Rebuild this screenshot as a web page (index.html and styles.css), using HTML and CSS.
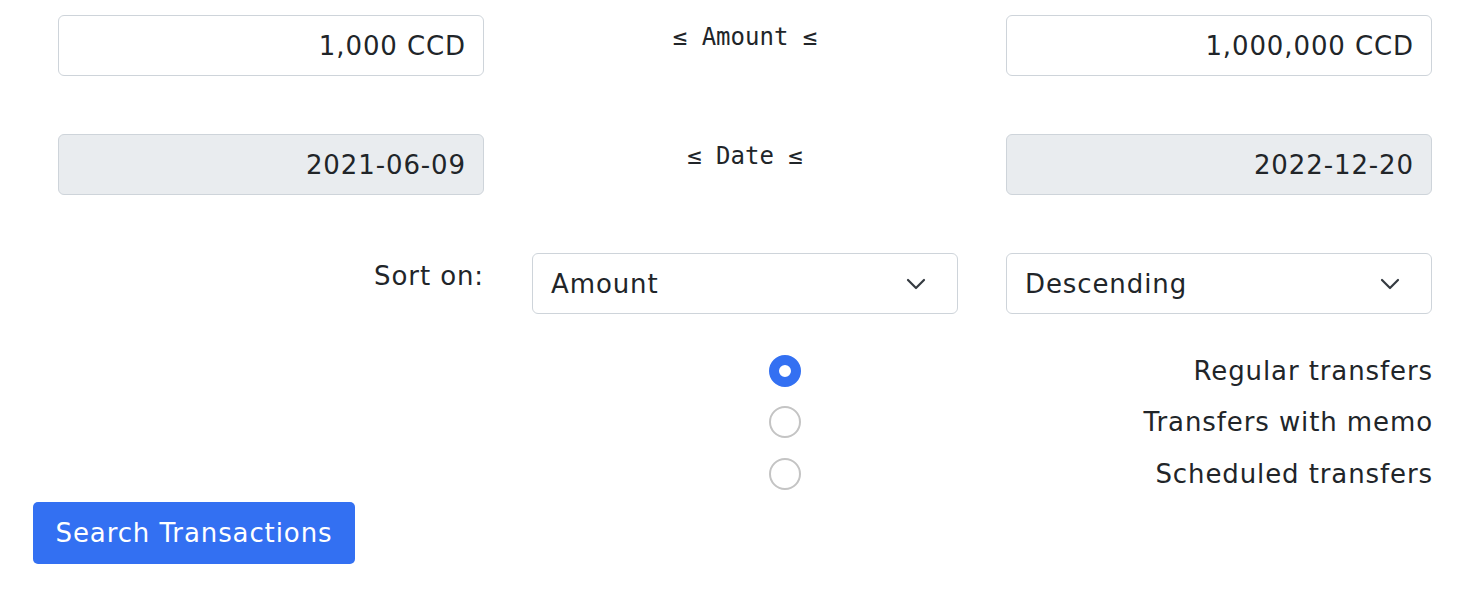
FILE: index.html
```html
<!DOCTYPE html>
<html lang="en">
<head>
<meta charset="utf-8">
<title>Search Transactions</title>
<link rel="stylesheet" href="styles.css">
</head>
<body>
<form class="search">
  <div class="grid">
    <div class="cell"><div class="field">1,000 CCD</div></div>
    <div class="cell mid"><span class="mono">≤ Amount ≤</span></div>
    <div class="cell"><div class="field">1,000,000 CCD</div></div>

    <div class="cell"><div class="field disabled">2021-06-09</div></div>
    <div class="cell mid"><span class="mono">≤ Date ≤</span></div>
    <div class="cell"><div class="field disabled">2022-12-20</div></div>

    <div class="cell label-cell"><span class="label">Sort on:</span></div>
    <div class="cell"><div class="select"><span>Amount</span><svg class="chev" viewBox="0 0 20 12" width="20" height="12"><path d="M2 2l8 8 8-8" fill="none" stroke="#343a40" stroke-width="2.2" stroke-linecap="round" stroke-linejoin="round"/></svg></div></div>
    <div class="cell"><div class="select"><span>Descending</span><svg class="chev" viewBox="0 0 20 12" width="20" height="12"><path d="M2 2l8 8 8-8" fill="none" stroke="#343a40" stroke-width="2.2" stroke-linecap="round" stroke-linejoin="round"/></svg></div></div>
  </div>

  <div class="radios">
    <div class="radio-row"><span class="radio checked"></span><span class="rlabel">Regular transfers</span></div>
    <div class="radio-row"><span class="radio"></span><span class="rlabel">Transfers with memo</span></div>
    <div class="radio-row"><span class="radio"></span><span class="rlabel">Scheduled transfers</span></div>
  </div>

  <button type="button" class="btn">Search Transactions</button>
</form>
</body>
</html>
```
FILE: styles.css
```css
* { box-sizing: border-box; }
html, body { margin: 0; background: #fff; }
body {
  font-family: "DejaVu Sans", "Noto Sans", sans-serif;
  color: #212529;
  letter-spacing: 0.9px;
}
.search {
  padding: 15px 0 0 33px;
  width: 1457px;
}
.grid {
  display: grid;
  grid-template-columns: repeat(3, 426px);
  column-gap: 48px;
  row-gap: 58px;
  padding: 0 0 0 25px;
}
.cell { height: 61px; }
.mid {
  display: flex;
  justify-content: center;
  padding-top: 6px;
}
.mono {
  font-family: "DejaVu Sans Mono", monospace;
  font-size: 24px;
  line-height: 32px;
  letter-spacing: 0;
  color: #212529;
}
.field {
  height: 61px;
  border: 1.5px solid #ced4da;
  border-radius: 6px;
  background: #fff;
  display: flex;
  align-items: center;
  justify-content: flex-end;
  padding: 0 17px;
  font-size: 26px;
}
.field.disabled { background: #e9ecef; }
.label-cell {
  display: flex;
  justify-content: flex-end;
  padding-top: 7px;
}
.label { font-size: 26px; line-height: 32px; }
.select {
  height: 61px;
  border: 1.5px solid #ced4da;
  border-radius: 6px;
  display: flex;
  align-items: center;
  justify-content: space-between;
  padding: 0 31px 0 18px;
  font-size: 26px;
}
.chev { display: block; }
.radios {
  margin-top: 32px;
  margin-left: 736px;
  width: 663px;
}
.radio-row {
  height: 52px;
  display: flex;
  align-items: center;
  justify-content: space-between;
}
.radio-row:first-child { height: 50px; }
.radio {
  width: 32px;
  height: 32px;
  border-radius: 50%;
  border: 2px solid #c4c4c4;
  background: #fff;
}
.radio.checked {
  border: 10px solid #3370f2;
  background: #fff;
}
.rlabel { font-size: 26px; margin-right: -1px; }
.btn {
  display: block;
  margin-top: 2px;
  width: 322px;
  height: 62px;
  background: #3370f2;
  color: #fff;
  border: none;
  border-radius: 5px;
  font-family: "DejaVu Sans", "Noto Sans", sans-serif;
  font-size: 26px;
  letter-spacing: 0.9px;
  padding: 0;
}
```
